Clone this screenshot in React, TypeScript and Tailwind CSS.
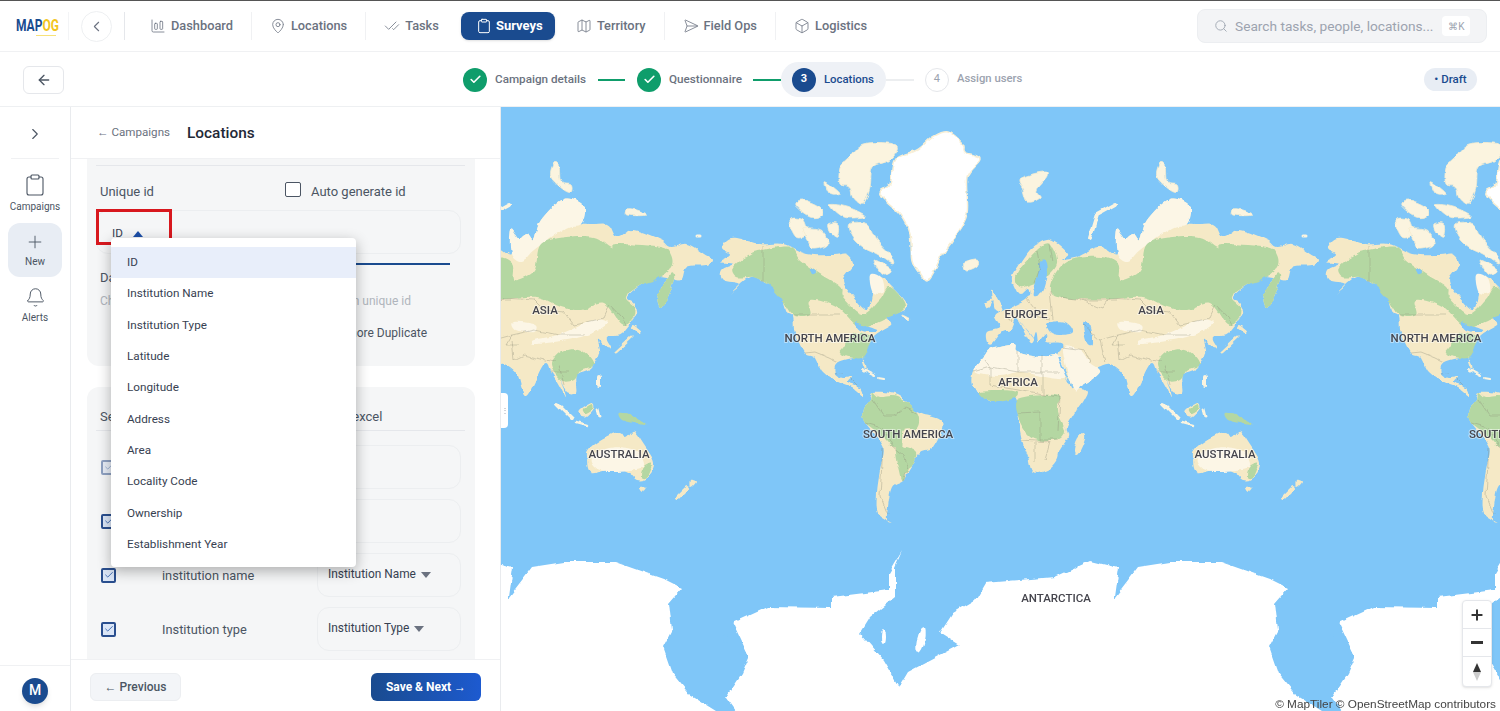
import React from "react";
import {
  ArrowLeft,
  Bell,
  Box,
  ChartColumnBig,
  CheckCheck,
  Check,
  ChevronLeft,
  ChevronRight,
  Clipboard,
  Map as MapIcon,
  MapPin,
  Plus,
  Search,
  SendHorizontal,
} from "lucide-react";

const CREAM = "#f5e9c6";
const LIGHT = "#fcf6e6";
const GREEN = "#b4d7a2";
const OCEAN = "#7fc6f8";
const ISLE = "#fbf4df";

const land = [
  // north america
  "727,240 737,238 760,244 783,244 807,254 833,255 847,254 853,264 843,280 853,297 867,310 873,293 870,276 880,277 890,285 907,307 887,317 892,324 873,337 863,358 867,372 862,358 838,362 835,373 843,378 852,377 848,383 860,388 862,396 852,388 837,382 823,372 815,358 805,353 795,333 793,317 787,312 780,294 767,284 750,277 730,294 740,284 723,280 722,270 733,264 720,262 730,255 722,249",
  // eurasia
  "1012,277 1020,264 1033,247 1050,240 1068,254 1060,260 1077,257 1100,247 1117,254 1117,230 1125,238 1133,234 1140,240 1147,220 1170,199 1190,207 1187,224 1213,224 1223,237 1240,230 1267,240 1277,247 1293,244 1310,254 1318,260 1312,265 1293,267 1287,280 1273,277 1263,277 1247,285 1233,297 1240,304 1242,314 1227,334 1213,337 1217,347 1209,345 1203,340 1205,353 1197,368 1183,375 1183,392 1173,393 1167,380 1172,398 1165,385 1157,372 1150,364 1132,396 1123,374 1110,364 1097,367 1090,363 1100,372 1083,385 1073,388 1063,373 1058,358 1062,344 1047,342 1046,334 1040,340 1038,342 1036,332 1030,343 1017,320 1010,330 1002,332 992,344 987,342 987,332 1000,328 995,317 1005,310 1027,298 1028,288 1020,294 1015,288",
  // africa
  "992,348 1015,344 1018,352 1040,357 1058,355 1065,377 1072,387 1087,392 1075,413 1067,427 1068,437 1060,450 1057,460 1047,470 1033,472 1028,457 1022,440 1017,413 1015,398 993,402 980,393 972,385 973,372 983,358",
  // south america
  "873,392 897,395 917,412 942,422 933,447 920,453 912,467 903,480 892,487 888,507 887,520 890,522 878,513 877,493 880,470 883,447 865,423 863,410 872,400",
  // australia
  "1207,440 1225,432 1232,438 1240,432 1250,445 1260,463 1253,478 1243,480 1235,473 1220,468 1197,473 1193,458 1195,450",
  "1277,273 1280,280 1272,300 1266,308 1264,295",
  "1245,487 1252,487 1248,492",
  "1297,480 1302,482 1297,487",
  "1083,433 1085,438 1078,454 1074,452 1077,440",
  "992,290 1003,310 995,310 992,300",
  "985,303 992,300 988,308",
  "1185,410 1198,402 1200,408 1193,416 1187,415",
];

const light = [
  "992,348 1015,344 1018,352 1040,357 1058,355 1065,377 1050,378 1020,372 1000,376 974,372 983,358",
  "1063,348 1073,388 1083,385 1100,372 1090,363 1080,350",
  "1140,340 1167,334 1200,320 1213,324 1187,337 1143,344",
  "1120,322 1142,325 1140,332 1122,330",
  "1197,458 1215,448 1240,450 1250,465 1235,470 1205,470",
  "1117,254 1117,230 1125,238 1133,234 1140,240 1147,220 1170,199 1190,207 1187,224 1172,228 1140,250 1128,262",
];

const green = [
  "733,267 750,254 763,250 790,247 800,260 820,274 840,287 843,297 863,314 880,300 890,287 905,307 883,320 860,327 837,307 810,300 810,315 793,315 780,297 767,284 753,277 737,277",
  "843,348 855,333 872,337 868,350 862,358 848,357 840,353",
  "1050,290 1055,274 1070,260 1100,257 1118,264 1120,280 1140,270 1147,244 1173,237 1200,237 1217,247 1223,244 1267,247 1277,255 1277,267 1263,279 1247,285 1232,297 1240,307 1238,320 1227,324 1210,304 1187,310 1167,307 1143,297 1110,299 1080,299 1060,297",
  "1020,287 1017,274 1037,250 1050,244 1057,264 1043,280 1033,284",
  "1157,364 1170,350 1187,350 1200,364 1187,370 1180,380 1167,380",
  "1277,273 1280,280 1272,300 1266,308 1264,295",
  "1017,400 1043,395 1060,397 1057,410 1065,430 1057,440 1038,440 1027,433 1018,417",
  "980,392 1000,390 1016,392 1015,398 993,402",
  "873,392 880,397 897,397 917,413 917,427 903,430 902,447 893,447 883,437 865,423 863,410 872,400",
  "896,448 905,447 917,453 913,465 908,470 903,480 900,472",
  "1225,413 1238,415 1253,425 1240,423 1228,420",
  "1189,409 1198,403 1199,408 1192,413",
  "1250,466 1258,463 1253,477 1247,476",
];

const islands = [
  "847,160 863,144 897,145 890,160 873,167 870,187 863,204 853,197 850,187 840,184 840,167",
  "850,224 867,224 877,240 890,254 893,264 877,254 863,247 853,237",
  "790,220 803,220 807,234 797,237",
  "803,229 820,230 828,244 813,249 807,240",
  "795,205 803,200 820,207 822,215 810,217",
  "825,182 833,187 840,194 830,194",
  "830,205 847,207 863,214 863,217 843,217",
  "828,224 838,224 837,237 830,232",
  "875,260 892,270 883,274 877,267",
  "902,315 910,319 905,319",
  "963,264 977,260 977,267 967,271",
  "1020,179 1043,172 1047,177 1037,190 1040,197 1028,202 1023,190",
  "1160,164 1165,167 1167,182 1177,185 1177,192 1170,190 1157,177",
  "1233,209 1243,210 1253,215 1233,215",
];

const water = [
  "1048,323 1065,322 1073,332 1060,335 1050,332",
  "1083,324 1090,325 1093,343 1087,343",
  "1040,262 1046,262 1048,272 1046,283 1042,293 1033,297 1035,285 1038,275",
  "1020,322 1034,340 1030,334 1022,325",
  "855,322 866,326 877,330 872,332 860,330",
  "810,268 816,272 812,274",
];

const borders = [
  "M763,246 L763,282",
  "M793,315 L840,315",
  "M805,353 L815,352 L830,358 L838,362",
  "M985,360 L990,367 L1018,372 L1018,352",
  "M1018,372 L1042,372 L1042,355 M1042,372 L1060,372",
  "M973,372 L990,367 L990,385 L1017,390 L1043,395 L1043,372",
  "M1043,395 L1060,397",
  "M1017,413 L1040,412 L1040,440 L1057,440",
  "M1022,440 L1050,442 L1045,460",
  "M1060,397 L1058,430 M1035,442 L1035,462",
  "M1083,300 L1103,308 L1110,298 L1140,300 L1150,310 L1170,312 L1180,325 L1210,318 L1216,305 L1228,318 L1232,325",
  "M1083,325 L1100,340 L1118,335 L1140,330 L1165,335 L1190,335",
  "M1118,340 L1120,360 L1130,355 L1160,362",
  "M1100,340 L1105,362 M1118,335 L1112,345 L1125,345",
  "M1062,347 L1085,350 L1090,363",
  "M1165,365 L1170,385 M1157,372 L1175,372",
  "M1030,315 L1050,320 M1005,310 L1012,322 M1027,298 L1040,315 M1050,290 L1053,320",
  "M1037,250 L1040,268 L1035,282 M1050,244 L1053,262",
  "M1117,300 L1083,300 L1060,297",
  "M873,400 L883,415 L895,415 L905,408 L917,413",
  "M865,423 L883,428 L893,447 L903,455 L908,470 L903,480",
  "M883,447 L880,495 L888,515",
  "M835,373 L842,372 M850,378 L858,386",
];

const ISLAND_STROKES = [
  { d: "M1115,204 L1097,214 L1090,237", w: 4, c: ISLE },
  { d: "M1222,352 L1238,337", w: 3, c: CREAM },
  { d: "M1163,403 L1178,418", w: 4, c: ISLE },
  { d: "M1182,422 L1193,425", w: 2.5, c: ISLE },
  { d: "M1293,488 L1283,498", w: 4, c: CREAM },
  { d: "M863,370 L875,376", w: 2, c: ISLE },
  { d: "M878,378 L884,379", w: 2, c: ISLE },
  { d: "M1240,327 L1245,331", w: 4, c: CREAM },
  { d: "M1205,377 L1205,386", w: 4, c: ISLE },
  { d: "M1203,410 L1205,418", w: 3, c: ISLE },
  { d: "M1303,236 L1306,236", w: 3, c: ISLE },
];

const labels: [string, number, number][] = [
  ["NORTH AMERICA", 830, 342],
  ["SOUTH AMERICA", 908, 438],
  ["EUROPE", 1026, 318],
  ["AFRICA", 1018, 386],
  ["ASIA", 1151, 314],
  ["AUSTRALIA", 1225, 458],
  ["ANTARCTICA", 1056, 602],
];

// closed catmull-rom through the traced points, so coasts don't look like polygons
const smooth = (points: string) => {
  const pts = points.split(" ").map((p) => p.split(",").map(Number));
  const n = pts.length;
  let d = `M${pts[0][0]},${pts[0][1]}`;
  for (let i = 0; i < n; i++) {
    const p0 = pts[(i - 1 + n) % n];
    const p1 = pts[i];
    const p2 = pts[(i + 1) % n];
    const p3 = pts[(i + 2) % n];
    const c1x = p1[0] + (p2[0] - p0[0]) / 6;
    const c1y = p1[1] + (p2[1] - p0[1]) / 6;
    const c2x = p2[0] - (p3[0] - p1[0]) / 6;
    const c2y = p2[1] - (p3[1] - p1[1]) / 6;
    d += ` C${c1x.toFixed(1)},${c1y.toFixed(1)} ${c2x.toFixed(1)},${c2y.toFixed(1)} ${p2[0]},${p2[1]}`;
  }
  return d + " Z";
};

const GREENLAND =
  "948,132 963,144 965,152 980,159 967,177 967,214 953,240 943,254 928,280 920,274 912,260 910,234 900,214 880,194 890,184 895,160 917,150 933,137";

const World = () => (
  <g>
    <g filter="url(#coast)">
      <path d={smooth(GREENLAND)} fill="#ffffff" stroke="#f8efd6" strokeWidth="1.5" />
      {land.map((p) => (
        <path key={p} d={smooth(p)} fill={CREAM} />
      ))}
      {light.map((p) => (
        <path key={p} d={smooth(p)} fill={LIGHT} />
      ))}
      {green.map((p) => (
        <path key={p} d={smooth(p)} fill={GREEN} />
      ))}
      {islands.map((p) => (
        <path key={p} d={smooth(p)} fill={ISLE} stroke="#f6ecce" strokeWidth="0.8" />
      ))}
      <path d={smooth("870,275 880,277 883,292 873,292")} fill={LIGHT} />
      {water.map((p) => (
        <path key={p} d={smooth(p)} fill={OCEAN} />
      ))}
      <path d="M1059,358 L1072,388" stroke={OCEAN} strokeWidth="1.6" fill="none" />
      {ISLAND_STROKES.map((s) => (
        <path key={s.d} d={s.d} stroke={s.c} strokeWidth={s.w} strokeLinecap="round" strokeLinejoin="round" fill="none" />
      ))}
      {borders.map((d) => (
        <path key={d} d={d} stroke="#8c8c78" strokeWidth="0.6" opacity="0.6" fill="none" />
      ))}
      <polygon
        points="509,597 532,567 564,562 615,562 666,580 682,588 669,603 672,630 663,647 672,673 690,695 716,711 720,750 500,750"
        fill="#ffffff"
      />
      <polygon
        points="736,711 726,697 742,673 749,657 733,623 768,607 832,608 832,597 889,590 889,573 902,551 895,567 895,597 870,617 860,633 883,660 899,687 908,672 959,645 940,633 953,613 975,600 985,583 1055,577 1090,561 1119,568 1115,597 1125,750 740,750"
        fill="#ffffff"
      />
      <ellipse cx="725" cy="638" rx="2.5" ry="5" fill={OCEAN} />
      <ellipse cx="883" cy="637" rx="2" ry="7" fill="#ffffff" />
      <ellipse cx="921" cy="640" rx="4" ry="13" fill="#ffffff" transform="rotate(12 921 640)" />
    </g>
    {labels.map(([t, x, y]) => (
      <text
        key={t}
        x={x}
        y={y}
        textAnchor="middle"
        fontFamily="Roboto, sans-serif"
        fontSize="11.5"
        fontWeight="500"
        fill="#45454d"
        stroke="#ffffff"
        strokeOpacity="0.45"
        strokeWidth="2"
        paintOrder="stroke"
      >
        {t}
      </text>
    ))}
  </g>
);

const WorldMap = () => (
  <svg viewBox="501 107 999 604" className="block h-full w-full" preserveAspectRatio="none">
    <defs>
      <filter id="coast" filterUnits="userSpaceOnUse" x="480" y="110" width="870" height="650">
        <feTurbulence type="fractalNoise" baseFrequency="0.09" numOctaves="3" seed="4" result="noise" />
        <feDisplacementMap in="SourceGraphic" in2="noise" scale="5" xChannelSelector="R" yChannelSelector="G" />
        <feGaussianBlur stdDeviation="0.35" />
      </filter>
    </defs>
    <rect x="501" y="107" width="999" height="604" fill={OCEAN} />
    <g transform="translate(-606 0)">
      <World />
    </g>
    <World />
    <g transform="translate(606 0)">
      <World />
    </g>
  </svg>
);

const NavItem = ({ icon, label, divider }: { icon: JSX.Element; label: string; divider?: boolean }) => (
  <div className={`flex h-[28px] items-center gap-[5px] px-[18px] text-[12.8px] font-medium text-[#6b7280] ${divider ? "border-r border-[#f0f1f3]" : ""}`}>
    {icon}
    <span>{label}</span>
  </div>
);

const Step = ({ n, label, state }: { n: string; label: string; state: "done" | "active" | "todo" }) => (
  <div className="flex items-center gap-2">
    {state === "done" && (
      <span className="flex h-6 w-6 items-center justify-center rounded-full bg-[#0f9d6b] text-white">
        <Check size={13} strokeWidth={3} />
      </span>
    )}
    {state === "active" && (
      <span className="flex h-6 w-6 items-center justify-center rounded-full bg-[#1a4b8f] text-[11px] font-bold text-white">{n}</span>
    )}
    {state === "todo" && (
      <span className="flex h-6 w-6 items-center justify-center rounded-full border border-[#e5e7eb] text-[11px] text-[#9ca3af]">{n}</span>
    )}
    <span className={`font-medium ${state === "active" ? "text-[11.4px] text-[#1a4b8f]" : state === "done" ? "text-[11.7px] text-[#6b7280]" : "text-[11.3px] text-[#9ca3af]"}`}>{label}</span>
  </div>
);

const RailItem = ({ icon, label, active, lift }: { icon: JSX.Element; label: string; active?: boolean; lift?: boolean }) => (
  <div className={`mx-2 flex h-[54px] w-[54px] flex-col items-center justify-center gap-[3px] rounded-xl text-[#4b5563] ${active ? "bg-[#e8edf4]" : ""} ${lift ? "pb-1" : ""}`}>
    {icon}
    <span className="text-[10px] leading-[13px]">{label}</span>
  </div>
);

const Tick = ({ faded }: { faded?: boolean }) => (
  <span className={`flex h-[15px] w-[15px] items-center justify-center rounded-[2px] border-2 border-[#2a4f8f] bg-[#dbe6f7] text-[#2a5aa8] ${faded ? "opacity-50" : ""}`}>
    <Check size={10} strokeWidth={2} />
  </span>
);

const Caret = ({ up }: { up?: boolean }) => (
  <span
    className={`inline-block h-0 w-0 border-x-[5px] border-x-transparent ${up ? "border-b-[6px] border-b-[#1d4fa8]" : "border-t-[6px] border-t-[#6b7280]"}`}
  />
);

const Row = ({ label, value, faded }: { label: string; value: string; faded?: boolean }) => (
  <div className="flex h-11 items-center pl-[5px]">
    <Tick faded={faded} />
    <span className="ml-[46px] w-[155px] pt-0.5 text-[12.8px] text-[#4b5563]">{label}</span>
    <div className="flex h-11 w-[144px] items-center gap-[5px] rounded-xl border border-[#eceef0] pl-[10px] text-[11.9px] text-[#374151]">
      {value}
      <Caret />
    </div>
  </div>
);

const OPTIONS = [
  "ID",
  "Institution Name",
  "Institution Type",
  "Latitude",
  "Longitude",
  "Address",
  "Area",
  "Locality Code",
  "Ownership",
  "Establishment Year",
];

export default function App() {
  return (
    <div className="flex h-[711px] w-[1500px] flex-col overflow-hidden bg-white font-['Roboto',sans-serif]">
      {/* top nav */}
      <header className="flex h-[52px] shrink-0 items-center border-t border-b border-t-[#555] border-b-[#f0f1f3]">
        <div className="relative ml-4 h-5 w-10">
          <span className="block origin-left scale-x-75 whitespace-nowrap text-[16px] leading-5 font-bold text-[#1a4b8f]">
            MAP<span className="text-[#f2c521]">OG</span>
          </span>
          <span className="absolute right-0 bottom-0 h-px w-5 bg-[#f7e27a]" />
        </div>
        <span className="mx-3 h-7 w-px bg-[#f3f4f6]" />
        <button className="flex h-[31px] w-[31px] items-center justify-center rounded-full border border-[#eef0f2] text-[#6b7280]">
          <ChevronLeft size={17} strokeWidth={1.5} />
        </button>
        <span className="mr-[7px] ml-3 h-7 w-px bg-[#e5e7eb]" />
        <NavItem icon={<ChartColumnBig size={16} strokeWidth={1.2} />} label="Dashboard" divider />
        <NavItem icon={<MapPin size={16} strokeWidth={1.2} />} label="Locations" divider />
        <NavItem icon={<CheckCheck size={16} strokeWidth={1.2} />} label="Tasks" />
        <div className="mr-[3px] ml-[4px] flex h-[28px] w-[94px] items-center gap-1 rounded-lg bg-[#1a4b8f] pl-[15px] text-[13px] font-bold text-white shadow-sm">
          <Clipboard size={16} strokeWidth={1.5} />
          <span>Surveys</span>
        </div>
        <NavItem icon={<MapIcon size={16} strokeWidth={1.2} />} label="Territory" divider />
        <NavItem icon={<SendHorizontal size={16} strokeWidth={1.2} />} label="Field Ops" divider />
        <NavItem icon={<Box size={16} strokeWidth={1.2} />} label="Logistics" />
        <div className="mr-[13px] ml-auto flex h-[34px] w-[290px] items-center rounded-lg border border-[#eceef1] bg-[#f3f4f6] pl-4 text-[13.7px] text-[#9ca3af]">
          <Search size={14} strokeWidth={1.5} />
          <span className="ml-[7px]">Search tasks, people, locations...</span>
          <span className="ml-[9px] flex h-5 w-7 items-center justify-center rounded bg-white text-[10px]">⌘K</span>
        </div>
      </header>

      {/* stepper */}
      <div className="relative flex h-[55px] shrink-0 items-center border-b border-[#eef0f2] pt-[1px]">
        <button className="ml-[23px] flex h-7 w-[41px] items-center justify-center rounded-md border border-[#e5e7eb] text-[#4b5563]">
          <ArrowLeft size={16} strokeWidth={2} />
        </button>
        <div className="ml-[399px] flex items-center">
          <Step n="1" label="Campaign details" state="done" />
          <span className="mx-3 h-0.5 w-[27px] bg-[#0f9d6b]" />
          <Step n="2" label="Questionnaire" state="done" />
          <span className="ml-[11px] h-0.5 w-7 bg-[#0f9d6b]" />
          <div className="flex h-[35px] w-[105px] items-center rounded-full bg-[#eef1f6] pl-[11px]">
            <Step n="3" label="Locations" state="active" />
          </div>
          <span className="mr-[11px] h-0.5 w-7 bg-[#eceef0]" />
          <Step n="4" label="Assign users" state="todo" />
        </div>
        <span className="mr-[23px] ml-auto flex h-[23px] w-[53px] items-center justify-center rounded-full bg-[#e8edf4] text-[11.5px] font-medium text-[#1a4b8f]">• Draft</span>
      </div>

      <div className="flex min-h-0 flex-1">
        {/* left rail */}
        <aside className="flex w-[71px] shrink-0 flex-col border-r border-[#e9ebee]">
          <div className="mx-[11px] flex h-[52px] shrink-0 items-center justify-center border-b border-[#f0f1f3] pt-0.5 text-[#4b5563]">
            <ChevronRight size={18} strokeWidth={1.5} />
          </div>
          <div className="flex flex-col gap-[1px] pt-[9px]">
            <RailItem lift icon={<Clipboard size={24} strokeWidth={1.1} />} label="Campaigns" />
            <RailItem active icon={<Plus size={20} strokeWidth={1.1} />} label="New" />
            <RailItem icon={<Bell size={21} strokeWidth={1.1} />} label="Alerts" />
          </div>
          <div className="mt-auto flex h-[46px] items-center justify-center border-t border-[#f0f1f3] pt-1">
            <span className="flex h-[26px] w-[26px] items-center justify-center rounded-full bg-[#1a4b8f] text-[14px] font-medium text-white shadow-md">M</span>
          </div>
        </aside>

        {/* panel */}
        <section className="relative flex w-[430px] shrink-0 flex-col border-r border-[#e9ebee]">
          <div className="flex h-[52px] shrink-0 items-center border-b border-[#f0f1f3] pl-[26px]">
            <span className="text-[11.6px] text-[#6b7280]">← Campaigns</span>
            <span className="mt-[3px] ml-[17px] text-[15.4px] font-medium text-[#1f2937]">Locations</span>
          </div>
          <div className="min-h-0 flex-1 overflow-hidden pr-[25px] pl-4">
            <div className="h-[207px] rounded-b-xl bg-[#f5f6f7] pr-[10px] pl-[9px]">
              <div className="h-[7px] border-b border-[#e5e7eb]" />
              <div className="flex h-[44px] items-center pt-2 pl-1 text-[13px] text-[#4b5563]">
                <span className="w-[185px]">Unique id</span>
                <span className="mb-[5px] h-[15px] w-4 rounded-[2px] border-[1.5px] border-[#4b5563] bg-white" />
                <span className="ml-[10px]">Auto generate id</span>
              </div>
              <div className="mr-1 flex h-[44px] items-center rounded-xl border border-[#eceef0] pt-1 pl-[15px] text-[11.7px] text-[#374151]">
                <span>ID</span>
                <span className="ml-[10px]">
                  <Caret up />
                </span>
              </div>
              <div className="mt-[9px] ml-[15px] h-0.5 w-[339px] bg-[#1a4b8f]" />
              <div className="mt-[3px] pl-1 text-[13px] text-[#4b5563]">Data duplicate</div>
              <div className="mt-[4px] flex w-[315px] justify-between pl-1 text-[12px] text-[#b0b5bc]">
                <span>Choose</span>
                <span>an unique id</span>
              </div>
              <div className="mt-[14px] w-[331px] text-right text-[12px] text-[#4b5563]">Ignore Duplicate</div>
            </div>
            <div className="mt-[21px] h-[272px] rounded-t-xl bg-[#f5f6f7] pr-[10px] pl-[9px]">
              <div className="flex h-[44px] items-end border-b border-[#e5e7eb] pb-1 pl-1 text-[13px] text-[#4b5563]">
                <span className="w-[62px]">Select</span>
                <span className="w-[157px]">Column</span>
                <span>From excel</span>
              </div>
              <div className="mt-[14px] flex flex-col gap-[10px]">
                <Row label="id" value="ID" faded />
                <Row label="id" value="ID" />
                <Row label="institution name" value="Institution Name" />
                <Row label="Institution type" value="Institution Type" />
              </div>
            </div>
          </div>
          <div className="flex h-[52px] shrink-0 items-center justify-between border-t border-[#f0f1f3] pt-[3px] pr-[19px] pl-[19px]">
            <button className="h-7 w-[91px] rounded-md border border-[#eceef1] bg-[#f3f5f8] text-[12px] font-medium text-[#4b5563]">← Previous</button>
            <button className="h-7 w-[110px] rounded-md bg-gradient-to-r from-[#1a4b8f] to-[#1d5ad0] text-[12px] font-bold text-white">Save &amp; Next →</button>
          </div>

          {/* red highlight + open select */}
          <div className="absolute top-[102px] left-[25px] h-[36px] w-[76px] border-[3px] border-[#d8181e]" />
          <ul className="absolute top-[131px] left-[40px] w-[245px] rounded bg-white pt-[9px] pb-[7px] text-[11.7px] text-[#374151] shadow-[0_4px_14px_rgba(0,0,0,0.3)]">
            {OPTIONS.map((o, i) => (
              <li key={o} className={`flex h-[31.33px] items-center pl-4 ${i === 0 ? "bg-[#e8eefa]" : ""}`}>
                {o}
              </li>
            ))}
          </ul>
        </section>

        {/* map */}
        <main className="relative min-w-0 flex-1 overflow-hidden">
          <WorldMap />
          <span className="absolute top-[286px] left-0 flex h-[35px] w-[7px] items-center justify-center rounded-r bg-white text-[8px] leading-none text-[#9ca3af]">⋮</span>
          <div className="absolute top-[493px] right-2 flex w-[30px] flex-col rounded border border-[#e5e7eb] bg-white text-[#333] shadow-sm">
            <span className="flex h-[28px] items-center justify-center border-b border-[#e5e7eb]">
              <Plus size={16} strokeWidth={3} />
            </span>
            <span className="flex h-[28px] items-center justify-center border-b border-[#e5e7eb] text-[#333]">
              <span className="h-[3px] w-3 bg-[#333]" />
            </span>
            <span className="flex h-[29px] flex-col items-center justify-center">
              <span className="h-0 w-0 border-x-[4px] border-b-[9px] border-x-transparent border-b-[#333]" />
              <span className="h-0 w-0 border-x-[4px] border-t-[9px] border-x-transparent border-t-[#ccc]" />
            </span>
          </div>
          <span className="absolute right-1 bottom-0 font-['Liberation_Sans',sans-serif] text-[11.8px] leading-[14px] text-[#444]">© MapTiler © OpenStreetMap contributors</span>
        </main>
      </div>
    </div>
  );
}
